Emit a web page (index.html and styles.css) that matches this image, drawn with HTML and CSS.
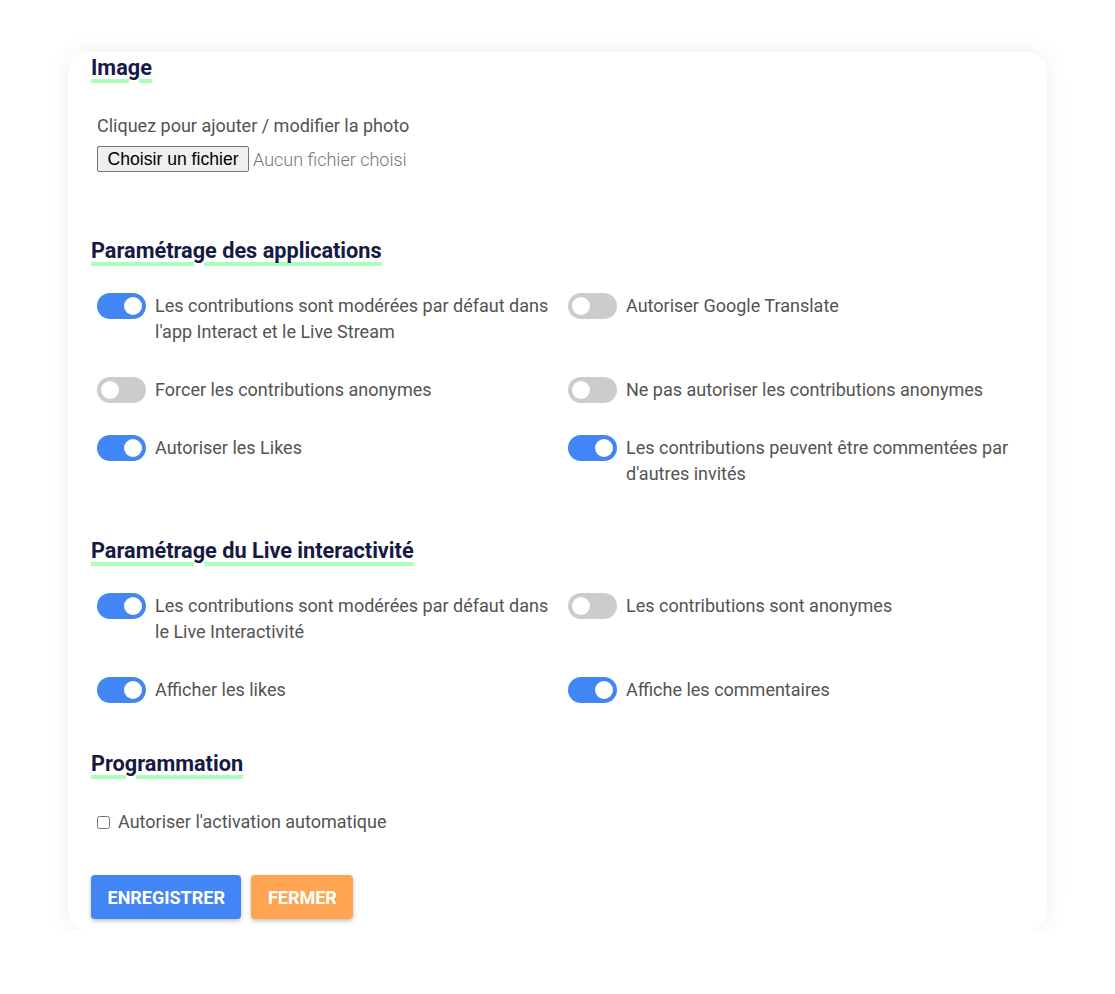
FILE: index.html
```html
<!DOCTYPE html>
<html lang="fr">
<head>
  <meta charset="UTF-8">
  <meta name="viewport" content="width=device-width, initial-scale=1.0">
  <title>Paramètres</title>
  <link rel="stylesheet" href="styles.css">
</head>
<body>
  <div class="card">
    <h2 class="section-title">Image</h2>
    <p class="photo-label">Cliquez pour ajouter / modifier la photo</p>
    <div class="file-row">
      <label class="file-btn">Choisir un fichier<input type="file" hidden></label>
      <span class="file-name">Aucun fichier choisi</span>
    </div>

    <h2 class="section-title apps-title">Paramétrage des applications</h2>
    <div class="options">
      <label class="option"><span class="switch on"></span><span>Les contributions sont modérées par défaut dans l'app Interact et le Live Stream</span></label>
      <label class="option"><span class="switch"></span><span>Autoriser Google Translate</span></label>
      <label class="option"><span class="switch"></span><span>Forcer les contributions anonymes</span></label>
      <label class="option"><span class="switch"></span><span>Ne pas autoriser les contributions anonymes</span></label>
      <label class="option"><span class="switch on"></span><span>Autoriser les Likes</span></label>
      <label class="option"><span class="switch on"></span><span>Les contributions peuvent être commentées par d'autres invités</span></label>
    </div>

    <h2 class="section-title live-title">Paramétrage du Live interactivité</h2>
    <div class="options">
      <label class="option"><span class="switch on"></span><span>Les contributions sont modérées par défaut dans le Live Interactivité</span></label>
      <label class="option"><span class="switch"></span><span>Les contributions sont anonymes</span></label>
      <label class="option"><span class="switch on"></span><span>Afficher les likes</span></label>
      <label class="option"><span class="switch on"></span><span>Affiche les commentaires</span></label>
    </div>

    <h2 class="section-title prog-title">Programmation</h2>
    <label class="check-row"><input type="checkbox"> Autoriser l'activation automatique</label>

    <div class="actions">
      <button class="btn btn-save">Enregistrer</button>
      <button class="btn btn-close">Fermer</button>
    </div>
  </div>

  <script>
    document.querySelectorAll('.switch').forEach(function (sw) {
      sw.parentNode.addEventListener('click', function () {
        sw.classList.toggle('on');
      });
    });
  </script>
</body>
</html>
```

FILE: styles.css
```css
body {
  margin: 0;
  font-family: Roboto, 'Liberation Sans', sans-serif;
  background: #fff;
  color: #535353;
}

.card {
  width: 979px;
  box-sizing: border-box;
  margin: 52px auto 0;
  padding: 3px 8px 11px 23px;
  background: #fff;
  border-radius: 20px;
  box-shadow: 0 0 24px rgba(0,0,0,0.07);
}

.section-title {
  margin: 0;
  font-size: 21.7px;
  line-height: 26px;
  font-weight: 700;
  color: #141a44;
  text-decoration: underline;
  text-decoration-color: #aaffbb;
  text-decoration-thickness: 4px;
  text-underline-offset: 4px;
}

.apps-title {
  margin-top: 66px;
}

.live-title {
  margin-top: 51px;
}

.prog-title {
  margin-top: 48px;
}

.photo-label {
  margin: 33px 0 0 6px;
  font-size: 18px;
  line-height: 24px;
}

.file-row {
  display: flex;
  align-items: center;
  margin: 8px 0 0 6px;
}

.file-btn {
  box-sizing: border-box;
  height: 26px;
  padding: 0 9.5px;
  display: flex;
  align-items: center;
  font-family: 'Liberation Sans', Arial, sans-serif;
  font-size: 17.6px;
  color: #000;
  background: #efefef;
  border: 1px solid #767676;
  border-radius: 2px;
  cursor: pointer;
}

.file-name {
  margin-left: 4px;
  font-size: 18px;
  font-weight: 300;
  color: #757575;
}

.options {
  display: grid;
  grid-template-columns: 1fr 1fr;
  row-gap: 32px;
  margin: 29px 0 0 6px;
}

.option {
  display: flex;
  align-items: flex-start;
  font-size: 18px;
  line-height: 26px;
  padding-right: 16px;
  cursor: pointer;
}

.switch {
  flex: none;
  position: relative;
  width: 49px;
  height: 26px;
  margin-right: 9px;
  border-radius: 13px;
  background: #cccccc;
  transition: background 0.2s;
}

.switch::after {
  content: '';
  position: absolute;
  top: 4px;
  left: 4px;
  width: 18px;
  height: 18px;
  border-radius: 50%;
  background: #fff;
  transition: left 0.2s;
}

.switch.on {
  background: #4285f4;
}

.switch.on::after {
  left: 27px;
}

.check-row {
  display: flex;
  align-items: center;
  margin: 33px 0 0 6px;
  font-size: 18px;
  line-height: 24px;
}

.check-row input {
  width: 13px;
  height: 13px;
  margin: 0 8px 0 0;
}

.actions {
  display: flex;
  gap: 10px;
  margin-top: 41px;
}

.btn {
  height: 44px;
  padding: 0 16.5px;
  border: none;
  border-radius: 4px;
  font-family: Roboto, sans-serif;
  font-size: 18px;
  font-weight: 700;
  text-transform: uppercase;
  color: #fff;
  box-shadow: 0 2px 4px rgba(0,0,0,0.25);
  cursor: pointer;
}

.btn-save {
  background: #4285f4;
}

.btn-close {
  background: #ffa552;
}
```
